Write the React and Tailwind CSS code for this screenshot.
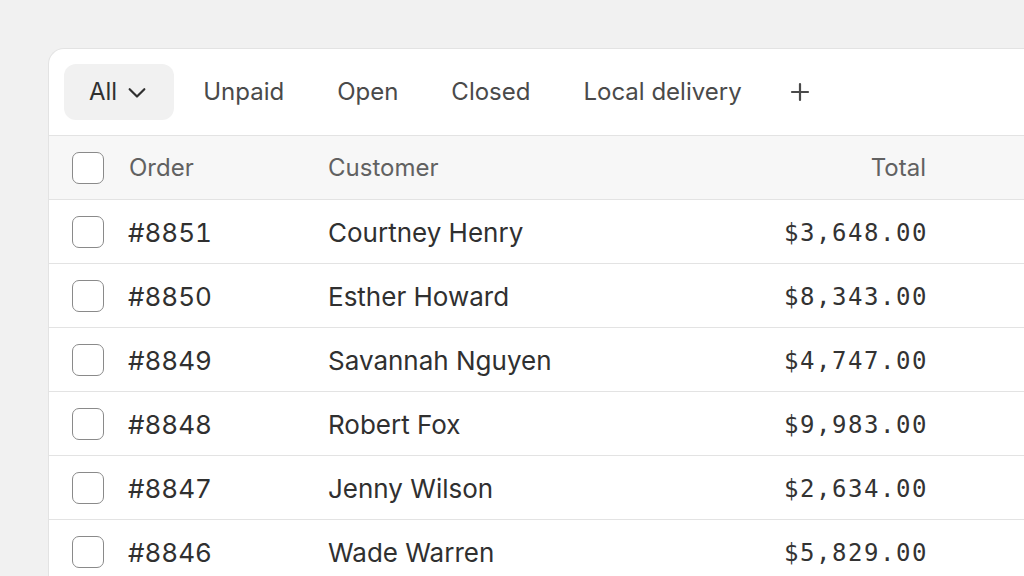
import React from "react";

const rows = [
  ["#8851", "Courtney Henry", "$3,648.00"],
  ["#8850", "Esther Howard", "$8,343.00"],
  ["#8849", "Savannah Nguyen", "$4,747.00"],
  ["#8848", "Robert Fox", "$9,983.00"],
  ["#8847", "Jenny Wilson", "$2,634.00"],
  ["#8846", "Wade Warren", "$5,829.00"],
];

function Box() {
  return <div className="w-[32px] h-[32px] rounded-[7px] border-[1.5px] border-[#8a8a8a] bg-white shrink-0" />;
}

export default function App() {
  return (
    <div className="w-[1024px] h-[576px] overflow-hidden bg-[#f1f1f1] pt-[48px] pl-[48px]" style={{ fontFamily: "Inter, 'Noto Sans', sans-serif" }}>
      <div className="w-[1000px] h-[560px] bg-white rounded-tl-[16px] border-l border-t border-[#e3e3e3]">
        <div className="flex items-center gap-[5px] px-[15px] pt-[15px] pb-[15px] border-b border-[#e3e3e3] text-[24px] text-[#4a4a4a]">
          <div className="flex items-center gap-[9px] h-[56px] pl-[25px] pr-[26px] rounded-[12px] bg-[#f1f1f1] text-[#303030]">
            <span>All</span>
            <svg width="22" height="22" viewBox="0 0 24 24" fill="none"><path d="M4 9l8 8 8-8" stroke="#303030" strokeWidth="2.4" strokeLinecap="round" strokeLinejoin="round" /></svg>
          </div>
          {["Unpaid", "Open", "Closed", "Local delivery"].map((t) => (
            <div key={t} className="h-[56px] px-[24px] flex items-center">{t}</div>
          ))}
          <div className="h-[56px] pl-[19px] pr-[24px] flex items-center">
            <svg width="20" height="20" viewBox="0 0 20 20" fill="none"><path d="M10 2v16M2 10h16" stroke="#4a4a4a" strokeWidth="2.2" strokeLinecap="round" /></svg>
          </div>
        </div>
        <div className="flex items-center h-[64px] bg-[#f7f7f7] border-b border-[#e3e3e3] pl-[23px] text-[24px] text-[#616161]">
          <Box />
          <div className="w-[224px] pl-[25px]">Order</div>
          <div className="w-[400px]">Customer</div>
          <div className="w-[198px] text-right">Total</div>
        </div>
        {rows.map(([o, c, t]) => (
          <div key={o} className="flex items-center h-[64px] border-b border-[#e3e3e3] pl-[23px] text-[26px] text-[#303030]">
            <Box />
            <div className="w-[224px] pl-[24px] pt-[2px]" style={{ fontVariantNumeric: "tabular-nums" }}>{o}</div>
            <div className="w-[400px] pt-[2px]">{c}</div>
            <div className="w-[200px] text-right text-[24px] tracking-[1.55px] mr-[-1.55px] pt-[2px] text-[#333]" style={{ fontFamily: "'DejaVu Sans Mono', monospace" }}>{t}</div>
          </div>
        ))}
      </div>
    </div>
  );
}
